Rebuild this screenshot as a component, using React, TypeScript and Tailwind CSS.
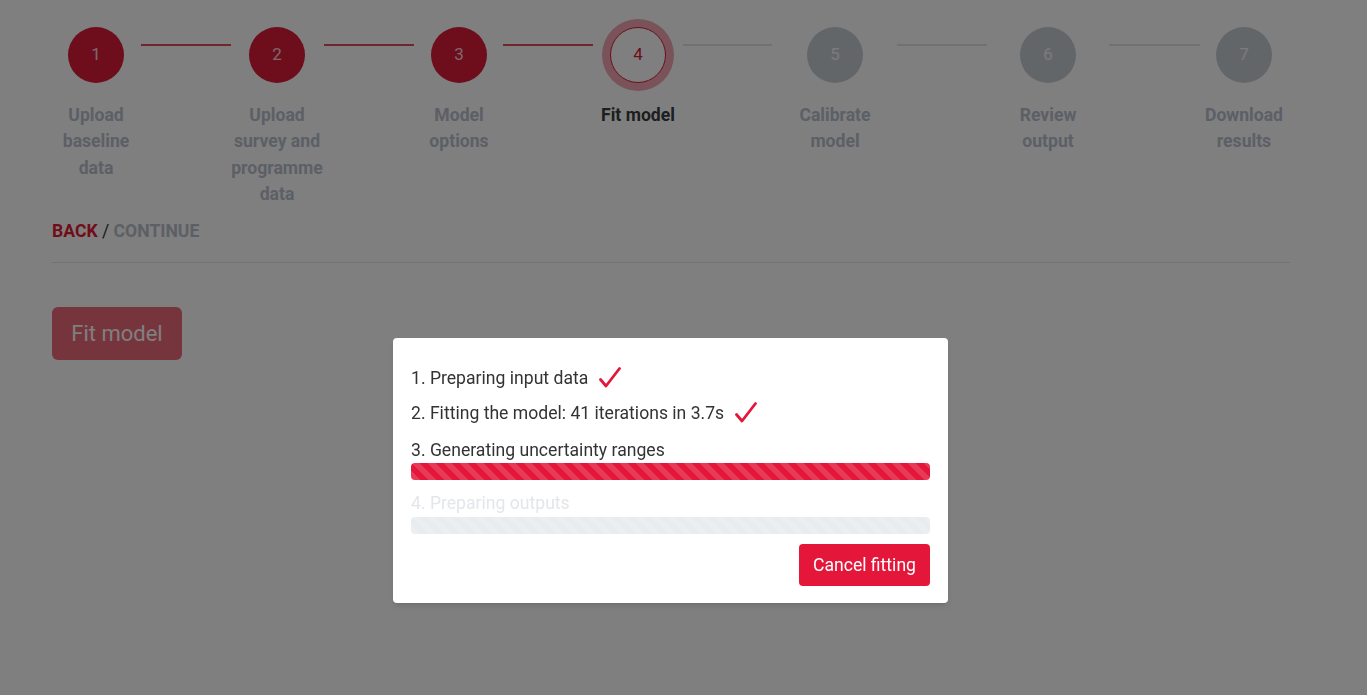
import React from 'react';

type Circle = { n: number; state: 'done' | 'active' | 'todo'; ml: string };
type Line = { done: boolean; cls: string };

const circles: Circle[] = [
  { n: 1, state: 'done', ml: 'ml-[16px]' },
  { n: 2, state: 'done', ml: 'ml-[18px]' },
  { n: 3, state: 'done', ml: 'ml-[17px]' },
  { n: 4, state: 'active', ml: 'ml-[9px]' },
  { n: 5, state: 'todo', ml: 'ml-[35px]' },
  { n: 6, state: 'todo', ml: 'ml-[33px]' },
  { n: 7, state: 'todo', ml: 'ml-[16px]' },
];

const lines: Line[] = [
  { done: true, cls: 'ml-[17px] w-[90px]' },
  { done: true, cls: 'ml-[19px] w-[90px]' },
  { done: true, cls: 'ml-[16px] w-[90px]' },
  { done: false, cls: 'ml-[9px] w-[89px]' },
  { done: false, cls: 'ml-[34px] w-[90px]' },
  { done: false, cls: 'ml-[33px] w-[91px]' },
];

const labels = [
  { text: 'Upload baseline data', cls: 'w-[88px]' },
  { text: 'Upload survey and programme data', cls: 'ml-[87px] w-[100px]' },
  { text: 'Model options', cls: 'ml-[92px] w-[80px]' },
  { text: 'Fit model', cls: 'ml-[89px] w-[100px]', active: true },
  { text: 'Calibrate model', cls: 'ml-[102px] w-[90px]' },
  { text: 'Review output', cls: 'ml-[128px] w-[80px]' },
  { text: 'Download results', cls: 'ml-[106px] w-[100px]' },
];

function StepCircle({ c }: { c: Circle }) {
  if (c.state === 'active') {
    return (
      <div className={`${c.ml} shrink-0 w-[72px] h-[72px] rounded-full bg-[#f3a6b3] flex items-center justify-center`}>
        <div className="w-14 h-14 rounded-full bg-white border border-[#dc1a38] flex items-center justify-center text-[17px] text-[#dc1a38]">
          {c.n}
        </div>
      </div>
    );
  }
  return (
    <div
      className={`${c.ml} shrink-0 w-14 h-14 rounded-full flex items-center justify-center text-[17px] ${
        c.state === 'done' ? 'bg-[#dc1a38] text-white/80' : 'bg-[#c7ccd3] text-[#f4f6f8]'
      }`}
    >
      {c.n}
    </div>
  );
}

function Check() {
  return (
    <svg width="24" height="22" viewBox="0 0 24 22" fill="none" className="shrink-0">
      <path d="M2.5 12.5 L8 19 L21.5 1.5" stroke="#e4173b" strokeWidth="2.8" strokeLinecap="round" strokeLinejoin="round" />
    </svg>
  );
}

const stripes =
  'bg-[linear-gradient(45deg,rgba(255,255,255,.15)_25%,transparent_25%,transparent_50%,rgba(255,255,255,.15)_50%,rgba(255,255,255,.15)_75%,transparent_75%,transparent)] bg-[length:16px_16px]';

export default function App() {
  return (
    <div className="relative min-h-screen bg-white font-['Roboto',sans-serif] text-[#343a40]">
      <div className="ml-[52px] w-[1238px] pt-[19px]">
        {/* Stepper circles */}
        <div className="flex items-center h-[72px]">
          {circles.map((c, i) => (
            <React.Fragment key={c.n}>
              <StepCircle c={c} />
              {i < lines.length && (
                <div
                  className={`${lines[i].cls} shrink-0 self-start mt-[25px] h-[2px] ${
                    lines[i].done ? 'bg-[#e04a5e]' : 'bg-[#e2e2e2]'
                  }`}
                />
              )}
            </React.Fragment>
          ))}
        </div>

        {/* Stepper labels */}
        <div className="flex mt-[11px] text-[17.6px] leading-[26.4px] font-bold text-center">
          {labels.map((l) => (
            <div key={l.text} className={`${l.cls} shrink-0 ${l.active ? 'text-[#3a3d40]' : 'text-[#b8c0cc]'}`}>
              {l.text}
            </div>
          ))}
        </div>

        {/* Back / continue */}
        <div className="mt-[10px] text-[17.6px] leading-[26.4px] font-bold uppercase">
          <span className="text-[#e31836]">Back</span>
          <span className="text-[#343a40] font-normal"> / </span>
          <span className="text-[#b8c0cc]">Continue</span>
        </div>

        <hr className="mt-[18px] border-0 h-px bg-[#e4e4e4]" />

        <button className="mt-[44px] w-[130px] h-[53px] rounded-[6px] bg-[#e31836] opacity-65 text-white text-[22px] leading-none">
          Fit model
        </button>
      </div>

      {/* Backdrop */}
      <div className="fixed inset-0 bg-black/50" />

      {/* Modal */}
      <div className="absolute left-[393px] top-[338px] w-[555px] bg-white rounded-[4px] shadow-md px-[18px] pt-[27px] pb-[17px] text-[17.6px] leading-[26px] text-[#333]">
        <div className="flex items-center gap-[10px]">
          <span>1. Preparing input data</span>
          <Check />
        </div>
        <div className="flex items-center gap-[10px] mt-[9px]">
          <span>2. Fitting the model: 41 iterations in 3.7s</span>
          <Check />
        </div>
        <div className="mt-[11px]">3. Generating uncertainty ranges</div>
        <div className={`h-[17px] rounded-[4px] bg-[#e4173b] ${stripes}`} />
        <div className="mt-[10px] text-[#e3e6ea]">4. Preparing outputs</div>
        <div className={`mt-px h-[17px] rounded-[4px] bg-[#e9ecef] ${stripes}`} />
        <div className="flex justify-end mt-[10px]">
          <button className="h-[42px] px-[14px] rounded-[4px] bg-[#e4173b] text-white text-[17.6px]">
            Cancel fitting
          </button>
        </div>
      </div>
    </div>
  );
}
